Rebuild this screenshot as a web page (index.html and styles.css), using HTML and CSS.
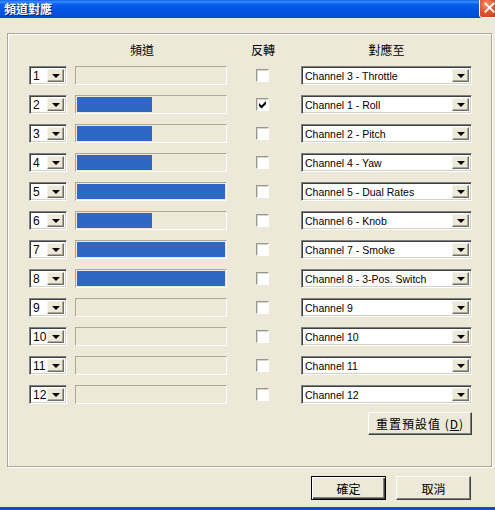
FILE: index.html
```html
<!DOCTYPE html>
<html lang="zh-Hant">
<head>
  <meta charset="UTF-8">
  <title>頻道對應</title>
  <link rel="stylesheet" href="styles.css">
</head>
<body>
  <div class="window">
    <!-- Title bar -->
    <div class="titlebar">
      <span class="title">頻道對應</span>
      <span class="close">
        <svg width="21" height="21" viewBox="0 0 21 21">
          <path d="M6 5 L15 14 M15 5 L6 14" stroke="#fff" stroke-width="2" stroke-linecap="square"/>
        </svg>
      </span>
    </div>

    <div class="content">
      <div class="group">
        <div class="grid" id="grid">
          <div class="hd"></div>
          <div class="hd hdBar">頻道</div>
          <div class="hd hdRev">反轉</div>
          <div class="hd">對應至</div>
        </div>
        <div class="resetRow">
          <div class="button resetButton">重置預設值 (<u>D</u>)</div>
        </div>
      </div>

      <div class="actions">
        <div class="button defaultButton">確定</div>
        <div class="button">取消</div>
      </div>
    </div>

    <div class="frameBottom"></div>
  </div>

  <script>
    // channel rows: fill percent, inverted, mapped output
    const rows = [
      [0, false, 'Channel 3 - Throttle'],
      [51, true, 'Channel 1 - Roll'],
      [51, false, 'Channel 2 - Pitch'],
      [51, false, 'Channel 4 - Yaw'],
      [100, false, 'Channel 5 - Dual Rates'],
      [51, false, 'Channel 6 - Knob'],
      [100, false, 'Channel 7 - Smoke'],
      [100, false, 'Channel 8 - 3-Pos. Switch'],
      [0, false, 'Channel 9'],
      [0, false, 'Channel 10'],
      [0, false, 'Channel 11'],
      [0, false, 'Channel 12']
    ];

    const arrow = '<span class="dropButton"><span class="arrow"></span></span>';
    const check = '<svg width="9" height="9" viewBox="0 0 9 9"><path d="M1 3 L3.5 5.5 L8 1 L8 4 L3.5 8.5 L1 6 Z" fill="#000"/></svg>';

    const grid = document.getElementById('grid');
    let html = '';
    rows.forEach((r, i) => {
      html += '<div class="numCombo"><span class="numText">' + (i + 1) + '</span>' + arrow + '</div>';
      html += '<div class="bar"><div class="barFill" style="width:' + r[0] + '%"></div></div>';
      html += '<div class="checkCell"><span class="checkbox">' + (r[1] ? check : '') + '</span></div>';
      html += '<div class="combo"><span class="comboText">' + r[2] + '</span>' + arrow + '</div>';
    });
    grid.insertAdjacentHTML('beforeend', html);
  </script>
</body>
</html>
```

FILE: styles.css
```css
body {
  margin: 0;
  padding: 0;
  background-color: #ECE9D8;
  font-family: "Liberation Sans", Arial, "Noto Sans CJK TC", sans-serif;
  font-size: 11px;
  color: #000;
}

.window {
  width: 495px;
  height: 510px;
  display: flex;
  flex-direction: column;
  overflow: hidden;
  background-color: #ECE9D8;
}

/* Title bar */
.titlebar {
  height: 18px;
  display: flex;
  justify-content: space-between;
  align-items: flex-start;
  background: linear-gradient(to bottom, #0A5FEE 0%, #3A8BF9 10%, #0560EC 25%, #0054E3 55%, #0050DC 85%, #0A46C8 100%);
  overflow: hidden;
  flex-shrink: 0;
}

.title {
  padding-left: 4px;
  line-height: 17px;
  font-family: "Noto Sans CJK TC", sans-serif;
  font-weight: bold;
  font-size: 12px;
  color: #fff;
  text-shadow: 1px 1px 0 #0A1E6E;
}

.close {
  width: 21px;
  height: 21px;
  margin-right: -5px;
  margin-top: -3px;
  box-sizing: border-box;
  border: 1px solid #fff;
  border-radius: 3px;
  background: radial-gradient(circle at 35% 35%, #F0926E 0%, #E2572E 45%, #C5361A 100%);
  display: flex;
}

/* Body */
.content {
  display: flex;
  flex-direction: column;
}

.group {
  margin: 15px 0 0 7px;
  width: 485px;
  height: 434px;
  box-sizing: border-box;
  border: 1px solid #ACA899;
  box-shadow: inset 1px 1px 0 #fff, 1px 1px 0 #fff;
  padding: 8px 0 0 21px;
}

.grid {
  display: grid;
  grid-template-columns: 46px 152px 74px 171px;
  grid-template-rows: 14px;
  grid-auto-rows: 19px;
  row-gap: 10px;
}

.hd {
  height: 14px;
  line-height: 16px;
  text-align: center;
  font-family: "Noto Sans CJK TC", sans-serif;
  font-size: 12px;
}

.hdBar {
  padding-right: 18px;
}

.hdRev {
  padding-right: 2px;
}

/* small number combo */
.numCombo,
.combo {
  display: flex;
  align-items: stretch;
  box-sizing: border-box;
  background-color: #fff;
  border-top: 1px solid #808080;
  border-left: 1px solid #808080;
  border-right: 1px solid #fff;
  border-bottom: 1px solid #fff;
  box-shadow: inset 1px 1px 0 #404040, inset -1px -1px 0 #D4D0C8;
  padding: 2px;
}

.numCombo {
  width: 38px;
}

.numText,
.comboText {
  flex: 1;
  line-height: 15px;
  padding-left: 1px;
  white-space: nowrap;
  overflow: hidden;
}

.numText {
  font-size: 12px;
}

.dropButton {
  width: 17px;
  box-sizing: border-box;
  background-color: #ECE9D8;
  border-top: 1px solid #F4F3EE;
  border-left: 1px solid #F4F3EE;
  border-right: 1px solid #716F64;
  border-bottom: 1px solid #716F64;
  box-shadow: inset -1px -1px 0 #ACA899;
  display: flex;
  justify-content: center;
  align-items: center;
}

.arrow {
  width: 0;
  height: 0;
  border-left: 4px solid transparent;
  border-right: 4px solid transparent;
  border-top: 4px solid #000;
  margin-top: 1px;
}

/* level bar */
.bar {
  box-sizing: border-box;
  border-top: 1px solid #ACA899;
  border-left: 1px solid #ACA899;
  border-right: 1px solid #fff;
  border-bottom: 1px solid #fff;
  padding: 1px;
  display: flex;
}

.barFill {
  background-color: #2F68C4;
}

/* invert checkbox */
.checkCell {
  display: flex;
  align-items: center;
  padding-left: 29px;
}

.checkbox {
  width: 13px;
  height: 13px;
  box-sizing: border-box;
  background-color: #fff;
  border-top: 1px solid #9A988D;
  border-left: 1px solid #9A988D;
  border-right: 1px solid #fff;
  border-bottom: 1px solid #fff;
  box-shadow: inset 1px 1px 0 #D8D6CC;
  display: flex;
  justify-content: center;
  align-items: center;
}

.combo {
  width: 171px;
  padding-left: 2px;
}

.comboText {
  padding-left: 1px;
  font-size: 10.5px;
}

/* buttons */
.button {
  box-sizing: border-box;
  display: flex;
  justify-content: center;
  align-items: center;
  background-color: #ECE9D8;
  border-top: 1px solid #fff;
  border-left: 1px solid #fff;
  border-right: 1px solid #404040;
  border-bottom: 1px solid #404040;
  box-shadow: inset -1px -1px 0 #808080;
  font-family: "Noto Sans CJK TC", sans-serif;
  font-size: 12px;
}

.resetRow {
  display: flex;
  justify-content: flex-end;
  padding-right: 19px;
  margin-top: 8px;
}

.resetButton {
  width: 104px;
  height: 23px;
  letter-spacing: 1px;
}

.actions {
  display: flex;
  justify-content: flex-end;
  gap: 10px;
  padding-right: 24px;
  margin-top: 9px;
}

.actions .button {
  width: 75px;
  height: 24px;
}

.defaultButton {
  border: 1px solid #000;
  box-shadow: inset 1px 1px 0 #fff, inset -1px -1px 0 #404040, inset -2px -2px 0 #808080;
}

.frameBottom {
  margin-top: auto;
  height: 3px;
  background-color: #1C47C6;
}
```
